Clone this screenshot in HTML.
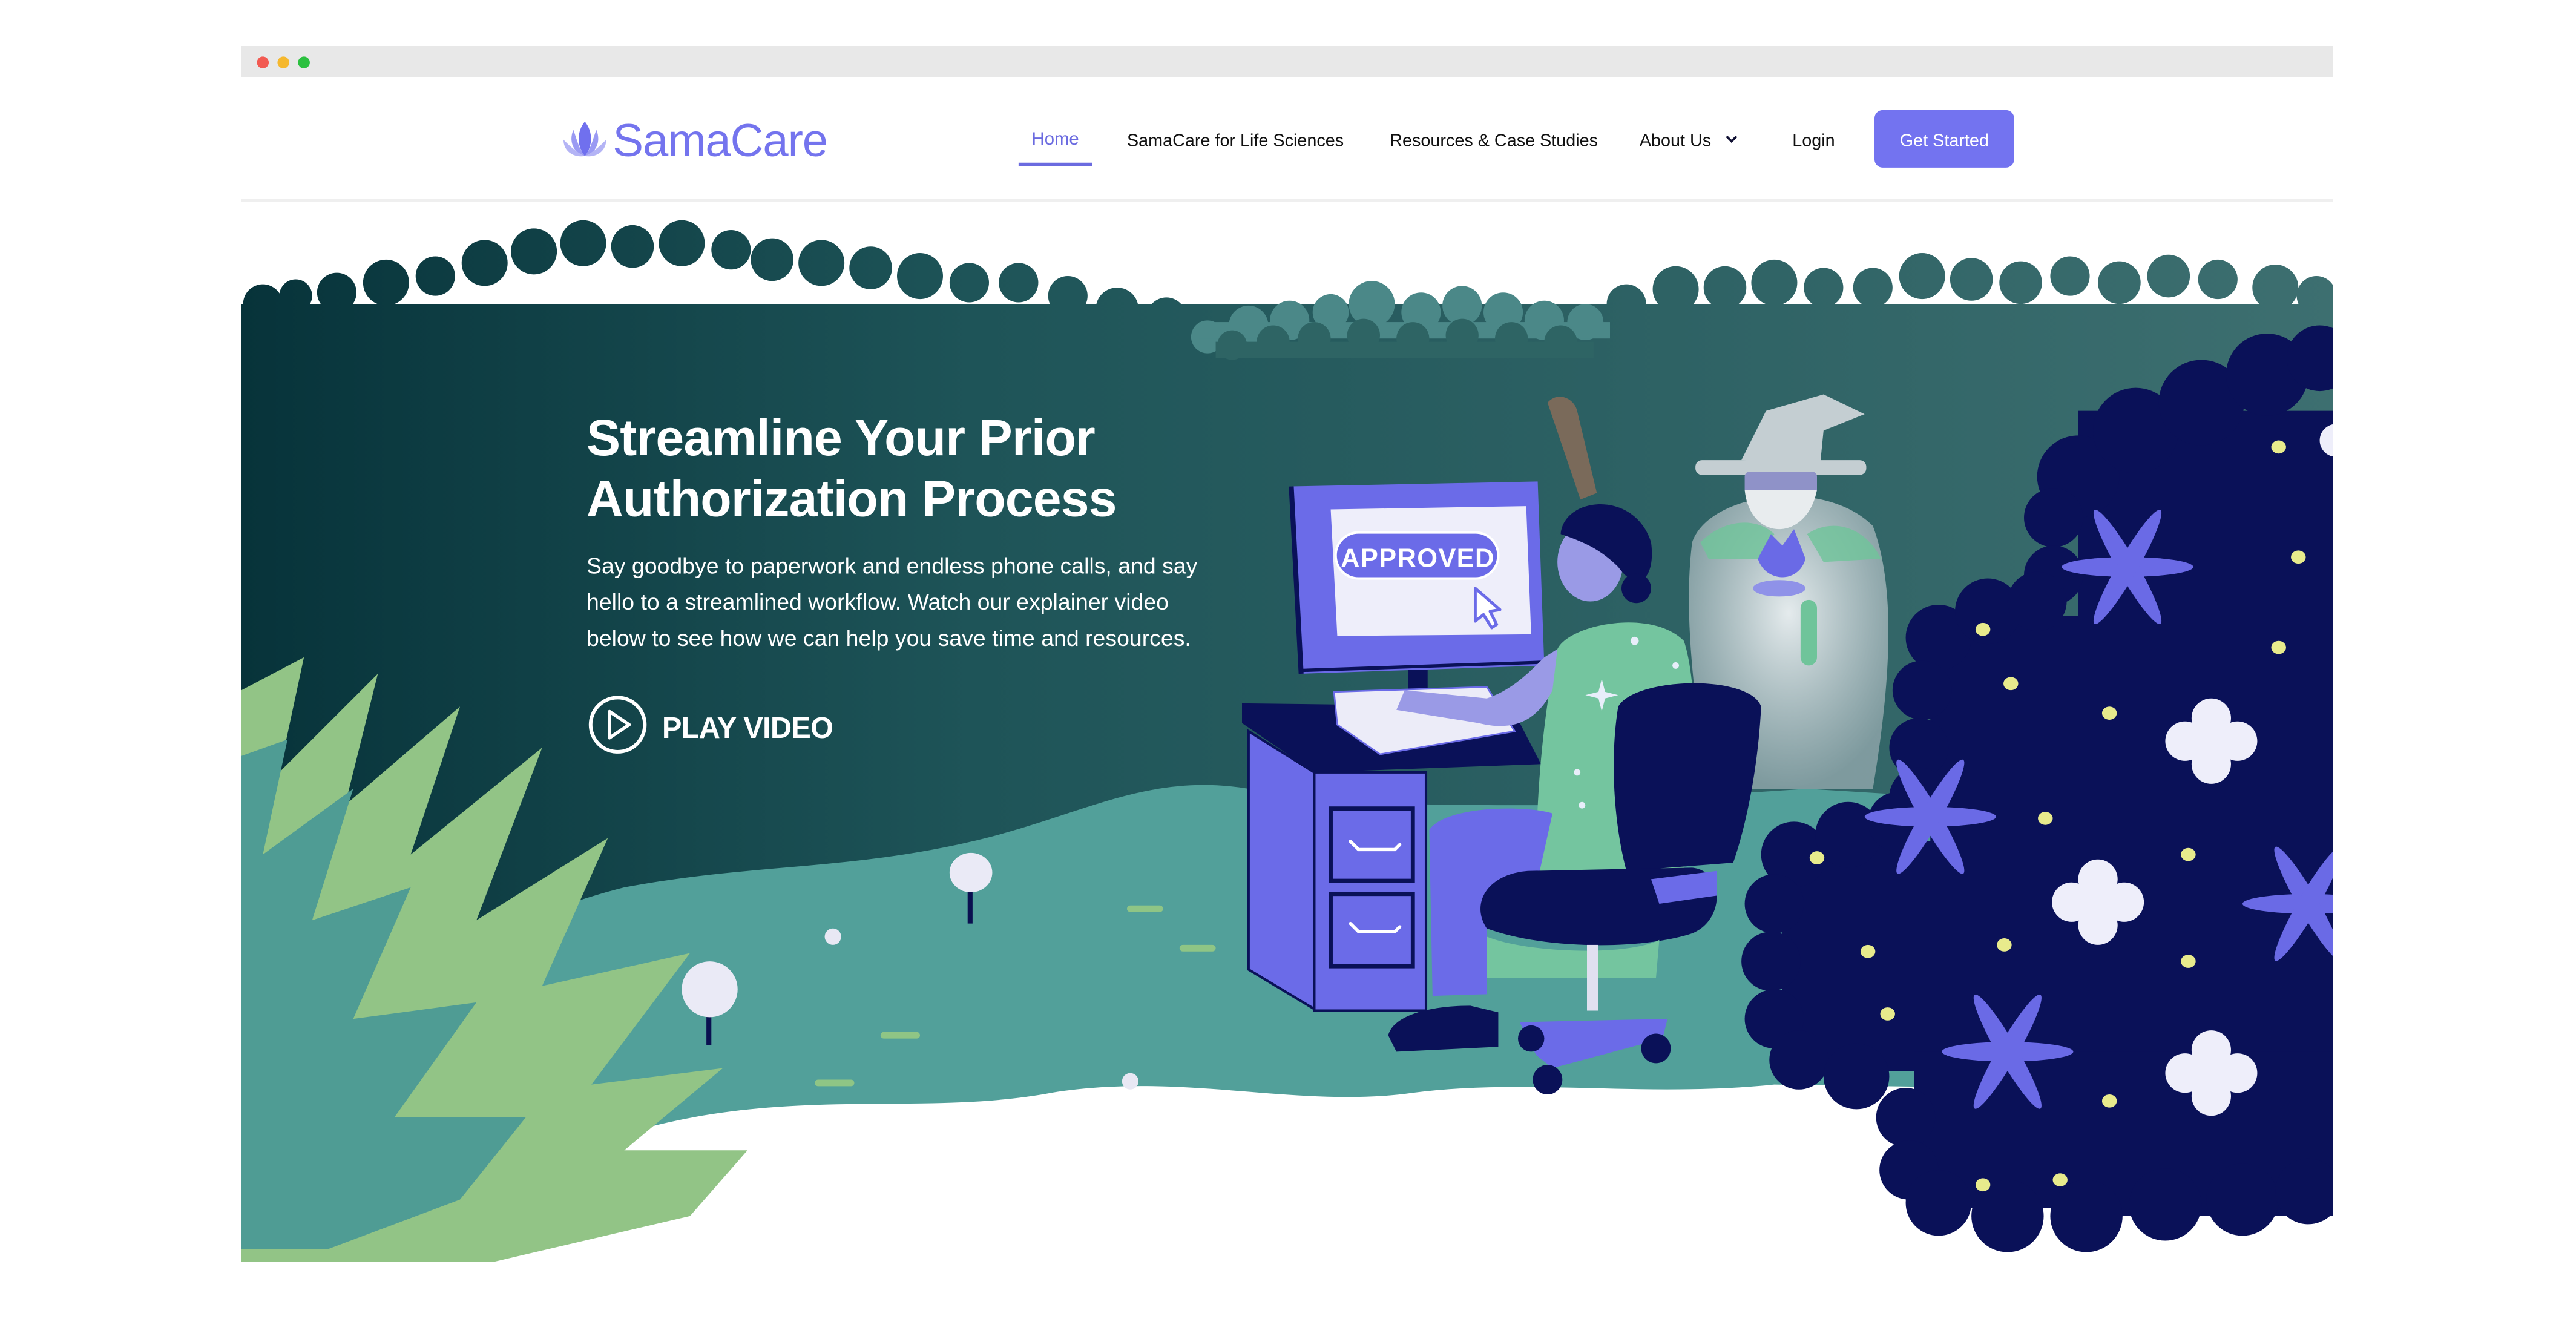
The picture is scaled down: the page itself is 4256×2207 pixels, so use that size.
<!DOCTYPE html>
<html><head><meta charset="utf-8">
<style>
html,body{margin:0;padding:0;background:#fff;}
svg{display:block;}
text{font-family:"Liberation Sans",sans-serif;}
</style></head>
<body>
<svg width="4256" height="2207" viewBox="0 0 1568 813" preserveAspectRatio="none" xmlns="http://www.w3.org/2000/svg">
<defs>
<linearGradient id="sky" gradientUnits="userSpaceOnUse" x1="147" x2="1420" y1="0" y2="0">
<stop offset="0" stop-color="#07333a"/>
<stop offset="0.35" stop-color="#1e5458"/>
<stop offset="1" stop-color="#3d6f70"/>
</linearGradient>
<radialGradient id="glow" cx="0.5" cy="0.4" r="0.6">
<stop offset="0" stop-color="#eef2f4" stop-opacity="0.95"/>
<stop offset="1" stop-color="#9fb1b6" stop-opacity="0.7"/>
</radialGradient>
<clipPath id="hero"><rect x="147" y="120" width="1273" height="660"/></clipPath>
<g id="star6"><ellipse rx="40" ry="6"/><ellipse rx="40" ry="6" transform="rotate(60)"/><ellipse rx="40" ry="6" transform="rotate(120)"/></g>
<g id="clover"><circle cx="0" cy="-14" r="12"/><circle cx="0" cy="14" r="12"/><circle cx="-16" cy="0" r="12"/><circle cx="16" cy="0" r="12"/><circle r="10"/></g>
</defs>
<rect width="1568" height="813" fill="#fff"/>
<rect x="147" y="28" width="1273" height="19" fill="#e8e8e8"/>
<circle cx="160" cy="38" r="3.6" fill="#f25a52"/>
<circle cx="172.5" cy="38" r="3.6" fill="#f5b82e"/>
<circle cx="185" cy="38" r="3.6" fill="#2bc03f"/>
<path d="M356,74 C351,80 351,89 356,95 C361,89 361,80 356,74Z" fill="#7070ee"/>
<path d="M349,79 C346,86 349,93 356,95 C352,90 351,84 349,79Z" fill="#9a9af3"/>
<path d="M363,79 C366,86 363,93 356,95 C360,90 361,84 363,79Z" fill="#9a9af3"/>
<path d="M343,85 C343,92 349,96 356,95 C350,92 347,89 343,85Z" fill="#b4b4f5"/>
<path d="M369,85 C369,92 363,96 356,95 C362,92 365,89 369,85Z" fill="#b4b4f5"/>
<text x="373" y="95" font-size="28" fill="#7474ee" letter-spacing="-0.4">SamaCare</text>
<text x="628" y="88" font-size="10.8" fill="#6b6be0">Home</text>
<rect x="620" y="99" width="45" height="2" fill="#6b6be0"/>
<text x="686" y="89" font-size="10.6" fill="#111">SamaCare for Life Sciences</text>
<text x="846" y="89" font-size="10.6" fill="#111">Resources &amp; Case Studies</text>
<text x="998" y="89" font-size="10.6" fill="#111">About Us</text>
<path d="M1051,83 l3,3 l3,-3" stroke="#113" stroke-width="1.4" fill="none"/>
<text x="1091" y="89" font-size="10.6" fill="#111">Login</text>
<rect x="1141" y="67" width="85" height="35" rx="5" fill="#7373f0"/>
<text x="1183.5" y="89" font-size="10.6" fill="#fff" text-anchor="middle">Get Started</text>
<rect x="147" y="121" width="1273" height="2" fill="#efefef"/>
<g clip-path="url(#hero)">
<g fill="url(#sky)">
<rect x="147" y="185" width="1273" height="520"/>
<circle cx="160" cy="185" r="12"/><circle cx="180" cy="180" r="10"/><circle cx="205" cy="178" r="12"/><circle cx="235" cy="172" r="14"/><circle cx="265" cy="168" r="12"/>
<circle cx="295" cy="160" r="14"/><circle cx="325" cy="153" r="14"/><circle cx="355" cy="148" r="14"/><circle cx="385" cy="150" r="13"/><circle cx="415" cy="148" r="14"/><circle cx="445" cy="152" r="12"/>
<circle cx="470" cy="158" r="13"/><circle cx="500" cy="160" r="14"/><circle cx="530" cy="163" r="13"/><circle cx="560" cy="168" r="14"/><circle cx="590" cy="172" r="12"/><circle cx="620" cy="172" r="12"/><circle cx="650" cy="180" r="12"/>
<circle cx="680" cy="188" r="13"/><circle cx="710" cy="193" r="12"/><circle cx="740" cy="198" r="12"/>
<circle cx="990" cy="185" r="12"/><circle cx="1020" cy="176" r="14"/><circle cx="1050" cy="175" r="13"/><circle cx="1080" cy="172" r="14"/><circle cx="1110" cy="175" r="12"/>
<circle cx="1140" cy="175" r="12"/><circle cx="1170" cy="168" r="14"/><circle cx="1200" cy="170" r="13"/><circle cx="1230" cy="172" r="13"/><circle cx="1260" cy="168" r="12"/><circle cx="1290" cy="172" r="13"/>
<circle cx="1320" cy="168" r="13"/><circle cx="1350" cy="170" r="12"/><circle cx="1385" cy="175" r="14"/><circle cx="1410" cy="180" r="12"/>
</g>
<g fill="#4b8888">
<circle cx="735" cy="205" r="10"/><circle cx="760" cy="198" r="12"/><circle cx="785" cy="195" r="12"/><circle cx="810" cy="190" r="11"/><circle cx="835" cy="185" r="14"/>
<circle cx="865" cy="190" r="12"/><circle cx="890" cy="186" r="12"/><circle cx="915" cy="190" r="12"/><circle cx="940" cy="195" r="12"/><circle cx="965" cy="196" r="11"/>
<rect x="730" y="196" width="250" height="10"/>
</g>
<g fill="#2e6464">
<circle cx="750" cy="210" r="9"/><circle cx="775" cy="208" r="10"/><circle cx="800" cy="206" r="10"/><circle cx="830" cy="204" r="10"/><circle cx="860" cy="206" r="10"/><circle cx="890" cy="204" r="10"/><circle cx="920" cy="206" r="10"/><circle cx="950" cy="208" r="10"/>
<rect x="740" y="208" width="230" height="10"/>
</g>
<path d="M147,640 C250,600 300,560 380,540 C460,525 520,530 600,510 C660,495 700,470 760,480 C820,490 860,490 950,490 L1100,480 L1420,500 L1420,700 L147,700Z" fill="#52a09a"/>
<path d="M380,690 C480,660 560,680 640,665 C720,652 790,675 860,665 C930,656 1000,668 1080,660 L1420,665 L1420,780 L380,780Z" fill="#fff"/>
<g fill="#8fc585">
<rect x="686" y="551" width="22" height="4" rx="2"/><rect x="718" y="575" width="22" height="4" rx="2"/><rect x="536" y="628" width="24" height="4" rx="2"/><rect x="496" y="657" width="24" height="4" rx="2"/>
</g>
<circle cx="507" cy="570" r="5" fill="#e8e8f4"/>
<circle cx="688" cy="658" r="5" fill="#e8e8f4"/>
<rect x="589" y="538" width="3" height="24" fill="#0a1050"/>
<ellipse cx="591" cy="531" rx="13" ry="12" fill="#eaeaf6"/>
<rect x="430" y="610" width="3" height="26" fill="#0a1050"/>
<ellipse cx="432" cy="602" rx="17" ry="17" fill="#eaeaf6"/>
<path d="M147,420 L185,400 L170,470 L230,410 L210,490 L280,430 L250,520 L330,455 L290,560 L370,510 L330,600 L420,580 L360,660 L440,650 L380,700 L455,700 L420,740 L300,768 L147,768Z" fill="#92c486"/>
<path d="M147,460 L175,450 L160,520 L215,480 L190,560 L250,540 L215,620 L290,610 L240,680 L320,680 L280,730 L200,760 L147,760Z" fill="#4f9c94"/>
<path d="M942,245 C948,238 958,242 960,250 L972,300 L962,304Z" fill="#7a6a5a"/>
<path d="M1030,330 C1040,300 1110,290 1140,320 C1155,360 1150,420 1140,480 L1040,480 C1030,420 1025,370 1030,330Z" fill="url(#glow)"/>
<path d="M1060,280 L1075,250 L1110,240 L1135,252 L1110,262 L1108,282Z" fill="#c4ced2"/>
<rect x="1032" y="280" width="104" height="9" rx="4" fill="#c4ced2"/>
<rect x="1062" y="287" width="44" height="14" rx="3" fill="#8f92c8"/>
<path d="M1062,298 C1065,330 1100,330 1106,298Z" fill="#e8ecee"/>
<path d="M1035,330 C1050,315 1070,315 1080,325 L1070,340 L1040,340Z" fill="#6fc49a" opacity="0.8"/>
<path d="M1100,325 C1115,315 1135,320 1145,340 L1110,342Z" fill="#6fc49a" opacity="0.8"/>
<rect x="1096" y="365" width="10" height="40" rx="5" fill="#6fc49a"/>
<path d="M1070,340 L1078,325 L1085,332 L1092,322 L1099,340 C1095,355 1075,355 1070,340Z" fill="#6a6ae6"/>
<ellipse cx="1083" cy="358" rx="16" ry="5" fill="#8f92e8"/>
<path d="M756,428 L920,430 L938,465 L800,470 L756,440Z" fill="#0a1158"/>
<path d="M760,445 L800,470 L800,614 L760,590Z" fill="#6b6be8" stroke="#0a1158" stroke-width="1.5"/>
<rect x="800" y="470" width="68" height="145" fill="#6b6be8" stroke="#0a1158" stroke-width="1.5"/>
<rect x="810" y="492" width="50" height="44" fill="#6b6be8" stroke="#0a1158" stroke-width="2.5"/>
<rect x="810" y="544" width="50" height="44" fill="#6b6be8" stroke="#0a1158" stroke-width="2.5"/>
<path d="M822,512 l5,5 h22 l3,-3" stroke="#fff" stroke-width="2" fill="none" stroke-linecap="round"/>
<path d="M822,562 l5,5 h22 l3,-3" stroke="#fff" stroke-width="2" fill="none" stroke-linecap="round"/>
<rect x="857" y="405" width="12" height="15" fill="#0a1158"/>
<path d="M786,296 L936,293 L940,405 L792,410Z" fill="#6b6be8"/>
<path d="M786,296 L792,410" stroke="#0a1158" stroke-width="3"/>
<path d="M792,408 L938,403" stroke="#0a1158" stroke-width="2"/>
<path d="M810,310 L929,308 L932,386 L814,387Z" fill="#eeeefa"/>
<rect x="813" y="324" width="99" height="28" rx="14" fill="#6b6be8" stroke="#fff" stroke-width="1.5"/>
<text x="863" y="345" font-size="16" font-weight="bold" fill="#fff" text-anchor="middle" letter-spacing="0.5">APPROVED</text>
<path d="M898,358 l0,20 l5,-4 l5,8 l3,-2 l-4,-8 l6,-1Z" fill="#fff" stroke="#6b6be8" stroke-width="1.8" stroke-linejoin="round"/>
<path d="M812,421 L905,418 L922,445 L840,459 L814,441Z" fill="#ececf8" stroke="#6b6be8" stroke-width="1"/>
<path d="M948,395 C955,380 1005,370 1025,390 C1035,420 1032,490 1025,530 L935,530 C935,480 940,430 948,395Z" fill="#74c59f"/>
<path d="M940,400 L948,395 L945,420 C935,440 920,445 900,440 L850,432 L855,420 L905,425 C920,420 930,410 940,400Z" fill="#9a9ae6"/>
<path d="M870,505 C880,490 930,490 945,495 L935,540 L905,545 L905,605 L872,606Z" fill="#6b6be8"/>
<path d="M845,630 C848,618 870,612 895,612 L912,616 L912,637 L850,640Z" fill="#0a1158"/>
<ellipse cx="968" cy="342" rx="20" ry="24" fill="#9a9ae6"/>
<path d="M950,325 C952,302 995,298 1005,330 C1008,352 997,362 985,345 C975,335 965,330 950,325Z" fill="#0a1158"/>
<circle cx="996" cy="358" r="9" fill="#0a1158"/>
<g fill="#e8eefa"><circle cx="995" cy="390" r="2.5"/><circle cx="1020" cy="405" r="2"/><circle cx="960" cy="470" r="2"/><circle cx="963" cy="490" r="2"/></g>
<path d="M975,413 l2,8 l8,2 l-8,2 l-2,8 l-2,-8 l-8,-2 l8,-2Z" fill="#e8eefa"/>
<path d="M985,430 C995,412 1065,410 1072,430 C1070,470 1062,505 1055,525 L990,530 C982,500 980,460 985,430Z" fill="#0a1158"/>
<path d="M905,565 C895,550 905,532 930,530 L1030,528 C1050,530 1050,560 1030,568 C1000,578 940,578 905,565Z" fill="#0a1158"/>
<path d="M1005,535 L1045,530 L1045,545 L1010,550Z" fill="#6b6be8"/>
<path d="M905,570 C930,580 990,582 1010,572 L1008,595 L905,595Z" fill="#74c59f"/>
<rect x="966" y="575" width="7" height="40" fill="#e0e0f0"/>
<path d="M925,622 L1015,620 L1012,632 L945,650 L935,642Z" fill="#6b6be8"/>
<circle cx="942" cy="657" r="9" fill="#0a1158"/><circle cx="932" cy="632" r="8" fill="#0a1158"/><circle cx="1008" cy="638" r="9" fill="#0a1158"/>
<g fill="#0a1158">
<rect x="1265" y="250" width="155" height="490"/>
<rect x="1175" y="375" width="245" height="360"/>
<rect x="1085" y="512" width="335" height="140"/>
<rect x="1165" y="640" width="255" height="95"/>
<circle cx="1265" cy="290" r="25"/><circle cx="1300" cy="262" r="26"/><circle cx="1340" cy="245" r="26"/><circle cx="1380" cy="228" r="25"/><circle cx="1412" cy="218" r="20"/>
<circle cx="1250" cy="315" r="18"/><circle cx="1250" cy="350" r="18"/>
<circle cx="1180" cy="388" r="20"/><circle cx="1210" cy="372" r="20"/><circle cx="1240" cy="366" r="18"/>
<circle cx="1170" cy="420" r="18"/><circle cx="1168" cy="455" r="18"/><circle cx="1168" cy="485" r="18"/>
<circle cx="1092" cy="520" r="20"/><circle cx="1125" cy="508" r="20"/><circle cx="1155" cy="500" r="18"/>
<circle cx="1080" cy="550" r="18"/><circle cx="1078" cy="585" r="18"/><circle cx="1080" cy="620" r="18"/><circle cx="1095" cy="645" r="18"/><circle cx="1130" cy="655" r="20"/>
<circle cx="1160" cy="680" r="18"/><circle cx="1162" cy="712" r="18"/>
<circle cx="1180" cy="732" r="20"/><circle cx="1222" cy="740" r="22"/><circle cx="1270" cy="740" r="22"/><circle cx="1318" cy="733" r="22"/><circle cx="1365" cy="730" r="22"/><circle cx="1405" cy="725" r="20"/>
</g>
<g fill="#6a6ae6">
<use href="#star6" x="1295" y="345"/>
<use href="#star6" x="1175" y="497"/>
<use href="#star6" x="1222" y="640"/>
<use href="#star6" x="1405" y="550"/>
</g>
<g fill="#eeeefa">
<use href="#clover" x="1346" y="451"/>
<use href="#clover" x="1277" y="549"/>
<use href="#clover" x="1346" y="653"/>
<circle cx="1422" cy="268" r="10"/>
</g>
<g fill="#e8eb8c">
<ellipse cx="1387" cy="272" rx="4.5" ry="4"/><ellipse cx="1399" cy="339" rx="4.5" ry="4"/><ellipse cx="1387" cy="394" rx="4.5" ry="4"/><ellipse cx="1207" cy="383" rx="4.5" ry="4"/><ellipse cx="1224" cy="416" rx="4.5" ry="4"/>
<ellipse cx="1284" cy="434" rx="4.5" ry="4"/><ellipse cx="1245" cy="498" rx="4.5" ry="4"/><ellipse cx="1332" cy="520" rx="4.5" ry="4"/><ellipse cx="1106" cy="522" rx="4.5" ry="4"/><ellipse cx="1137" cy="579" rx="4.5" ry="4"/>
<ellipse cx="1220" cy="575" rx="4.5" ry="4"/><ellipse cx="1332" cy="585" rx="4.5" ry="4"/><ellipse cx="1149" cy="617" rx="4.5" ry="4"/><ellipse cx="1284" cy="670" rx="4.5" ry="4"/><ellipse cx="1207" cy="721" rx="4.5" ry="4"/><ellipse cx="1254" cy="718" rx="4.5" ry="4"/>
</g>
</g>
<text font-size="31" font-weight="bold" fill="#fff" letter-spacing="-0.3"><tspan x="357" y="277">Streamline Your Prior</tspan><tspan x="357" y="314">Authorization Process</tspan></text>
<text font-size="13.8" fill="#fff"><tspan x="357" y="349">Say goodbye to paperwork and endless phone calls, and say</tspan><tspan x="357" y="371">hello to a streamlined workflow. Watch our explainer video</tspan><tspan x="357" y="393">below to see how we can help you save time and resources.</tspan></text>
<circle cx="376" cy="441" r="16.5" stroke="#fff" stroke-width="2.2" fill="none"/>
<path d="M371,433 L383,441 L371,449Z" stroke="#fff" stroke-width="2" fill="none" stroke-linejoin="round"/>
<text x="403" y="449" font-size="18" font-weight="bold" fill="#fff" letter-spacing="-0.3">PLAY VIDEO</text>
</svg>
</body></html>
